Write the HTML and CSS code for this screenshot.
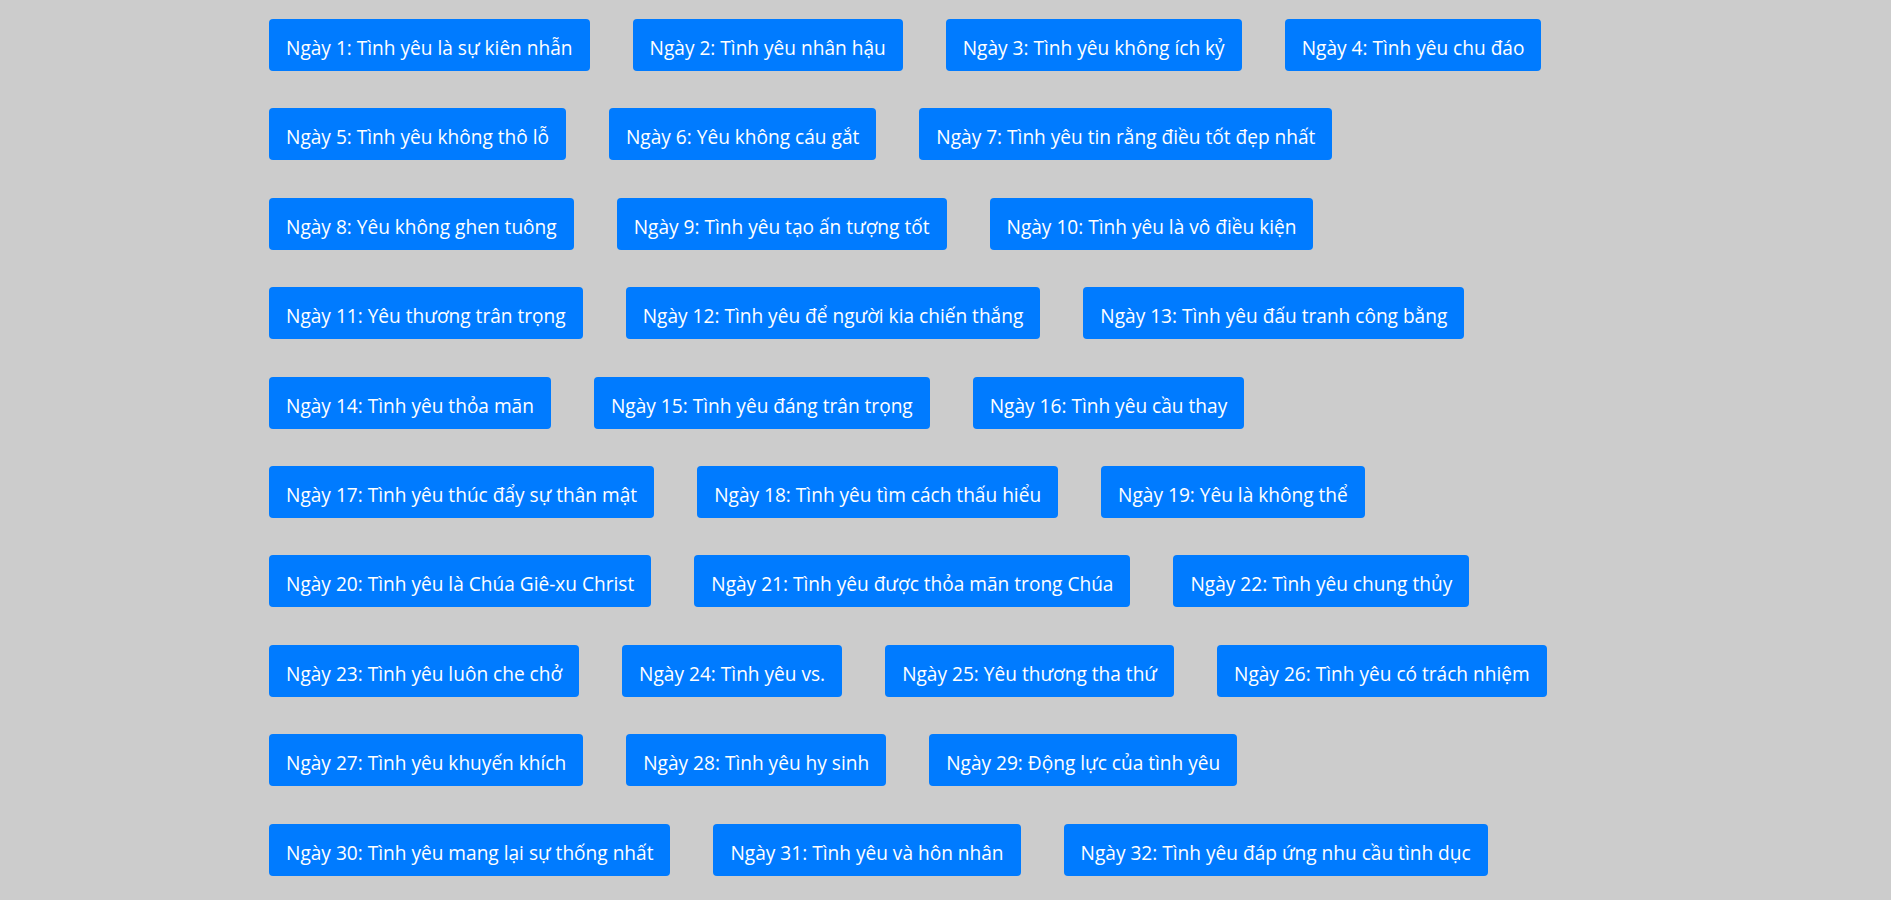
FILE: index.html
```html
<!DOCTYPE html>
<html lang="vi">
<head>
<meta charset="utf-8">
<title>Tình yêu</title>
<link rel="stylesheet" href="styles.css">
</head>
<body>
<div class="list">
  <div class="row">
    <a class="btn">Ngày 1: Tình yêu là sự kiên nhẫn</a>
    <a class="btn">Ngày 2: Tình yêu nhân hậu</a>
    <a class="btn">Ngày 3: Tình yêu không ích kỷ</a>
    <a class="btn">Ngày 4: Tình yêu chu đáo</a>
  </div>
  <div class="row">
    <a class="btn">Ngày 5: Tình yêu không thô lỗ</a>
    <a class="btn">Ngày 6: Yêu không cáu gắt</a>
    <a class="btn">Ngày 7: Tình yêu tin rằng điều tốt đẹp nhất</a>
  </div>
  <div class="row">
    <a class="btn">Ngày 8: Yêu không ghen tuông</a>
    <a class="btn">Ngày 9: Tình yêu tạo ấn tượng tốt</a>
    <a class="btn">Ngày 10: Tình yêu là vô điều kiện</a>
  </div>
  <div class="row">
    <a class="btn">Ngày 11: Yêu thương trân trọng</a>
    <a class="btn">Ngày 12: Tình yêu để người kia chiến thắng</a>
    <a class="btn">Ngày 13: Tình yêu đấu tranh công bằng</a>
  </div>
  <div class="row">
    <a class="btn">Ngày 14: Tình yêu thỏa mãn</a>
    <a class="btn">Ngày 15: Tình yêu đáng trân trọng</a>
    <a class="btn">Ngày 16: Tình yêu cầu thay</a>
  </div>
  <div class="row">
    <a class="btn">Ngày 17: Tình yêu thúc đẩy sự thân mật</a>
    <a class="btn">Ngày 18: Tình yêu tìm cách thấu hiểu</a>
    <a class="btn">Ngày 19: Yêu là không thể</a>
  </div>
  <div class="row">
    <a class="btn">Ngày 20: Tình yêu là Chúa Giê-xu Christ</a>
    <a class="btn">Ngày 21: Tình yêu được thỏa mãn trong Chúa</a>
    <a class="btn">Ngày 22: Tình yêu chung thủy</a>
  </div>
  <div class="row">
    <a class="btn">Ngày 23: Tình yêu luôn che chở</a>
    <a class="btn">Ngày 24: Tình yêu vs.</a>
    <a class="btn">Ngày 25: Yêu thương tha thứ</a>
    <a class="btn">Ngày 26: Tình yêu có trách nhiệm</a>
  </div>
  <div class="row">
    <a class="btn">Ngày 27: Tình yêu khuyến khích</a>
    <a class="btn">Ngày 28: Tình yêu hy sinh</a>
    <a class="btn">Ngày 29: Động lực của tình yêu</a>
  </div>
  <div class="row">
    <a class="btn">Ngày 30: Tình yêu mang lại sự thống nhất</a>
    <a class="btn">Ngày 31: Tình yêu và hôn nhân</a>
    <a class="btn">Ngày 32: Tình yêu đáp ứng nhu cầu tình dục</a>
  </div>
</div>
</body>
</html>
```
FILE: styles.css
```css
html, body {
  background: #cccccc;
}
body {
  margin: 8px;
  font-family: "Open Sans", "Noto Sans", sans-serif;
}
.list {
  display: flex;
  flex-direction: column;
  gap: 37.4px;
  padding: 11px 0 0 261px;
}
.row {
  display: flex;
  gap: 43px;
}
.btn {
  display: block;
  background: #007bff;
  color: #ffffff;
  font-size: 19.1px;
  line-height: 22px;
  padding: 18px 17px 12px;
  border-radius: 4px;
  white-space: nowrap;
  text-decoration: none;
}
```
